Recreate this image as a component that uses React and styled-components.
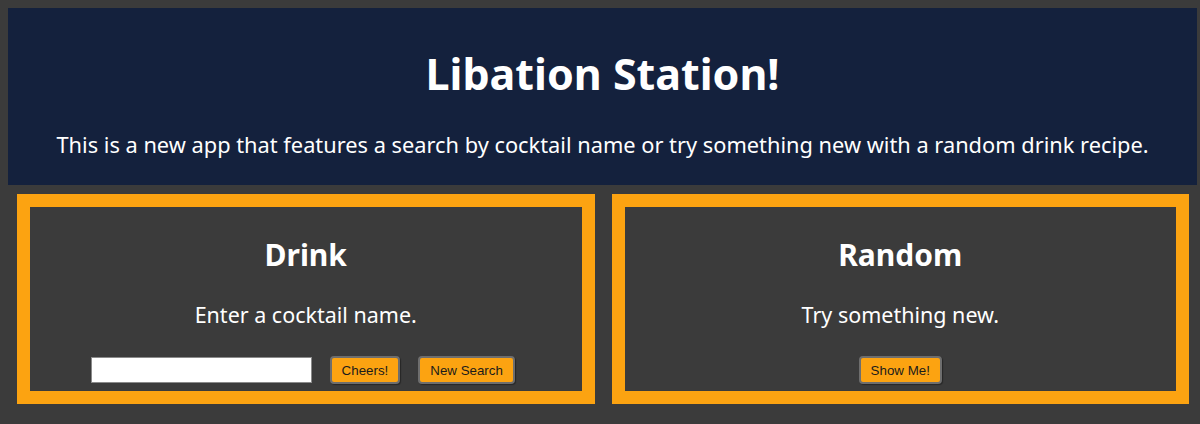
import React from "react"
import styled, { createGlobalStyle } from "styled-components"

const GlobalStyle = createGlobalStyle`
  html, body {
    background: #3b3b3b;
  }
  body {
    margin: 8px 3px 0 8px;
    font-family: "Noto Sans", "Open Sans", sans-serif;
    color: #ffffff;
  }
`

const Header = styled.header`
  background: #14213d;
  text-align: center;
  padding: 38px 20px 26px;
  h1 {
    margin: 0;
    font-size: 43px;
    line-height: 56px;
    font-weight: 700;
  }
  p {
    margin: 28px 0 0;
    font-size: 21.8px;
    line-height: 29px;
  }
`

const Cards = styled.main`
  display: flex;
  gap: 17px;
  padding: 9px 8px 30px 9px;
`

const Card = styled.section`
  flex: 1;
  border: 13px solid #fca311;
  background: #3b3b3b;
  text-align: center;
  padding: 28px 10px 7px;
  h2 {
    margin: 0;
    font-size: 30px;
    line-height: 40px;
    font-weight: 700;
  }
  p {
    margin: 25px 0 27px;
    font-size: 21.5px;
    line-height: 29px;
  }
`

const Controls = styled.div`
  display: flex;
  justify-content: center;
  align-items: center;
  gap: 18px;
  padding-right: ${(p) => (p.$offset ? "6px" : "0")};
`

const SearchInput = styled.input`
  width: 221px;
  height: 26px;
  box-sizing: border-box;
  border: 1px solid #8a8a8a;
  background: #ffffff;
  padding: 2px 4px;
`

const Button = styled.button`
  background: #fca311;
  color: #1b1b1b;
  font-family: "Liberation Sans", Arial, sans-serif;
  font-size: 13.33px;
  line-height: 15px;
  padding: 5px 10px;
  border: 2px solid #6e6e6e;
  border-radius: 4px;
  box-shadow: 1px 1px 1px rgba(0, 0, 0, 0.35);
  height: 28px;
  cursor: pointer;
`

const App = () => {
  return (
    <>
      <GlobalStyle />
      <Header>
        <h1>Libation Station!</h1>
        <p>
          This is a new app that features a search by cocktail name or try
          something new with a random drink recipe.
        </p>
      </Header>
      <Cards>
        <Card>
          <h2>Drink</h2>
          <p>Enter a cocktail name.</p>
          <Controls $offset>
            <SearchInput type="text" />
            <Button>Cheers!</Button>
            <Button>New Search</Button>
          </Controls>
        </Card>
        <Card>
          <h2>Random</h2>
          <p>Try something new.</p>
          <Controls>
            <Button>Show Me!</Button>
          </Controls>
        </Card>
      </Cards>
    </>
  )
}

export default App
